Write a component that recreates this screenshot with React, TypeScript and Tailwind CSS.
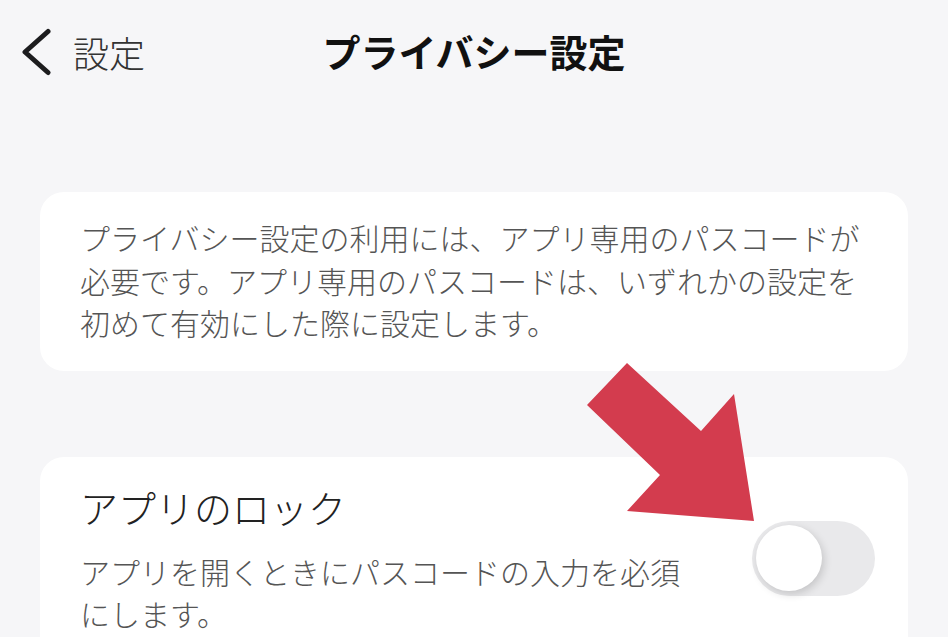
import React from "react";

export default function App() {
  const font = { fontFamily: '"Noto Sans CJK JP", "Noto Sans", sans-serif' };
  return (
    <div className="w-[948px] h-[637px] overflow-hidden bg-[#f6f6f8]" style={font}>
      <header className="grid grid-cols-[1fr_auto_1fr] items-center h-[104px]">
        <div className="flex items-center pl-[21px]">
          <svg width="30" height="52" viewBox="0 0 30 52" className="shrink-0">
            <path d="M27 5.5 L4 26 L27 46.5" fill="none" stroke="#1c1c1e" strokeWidth="5" strokeLinecap="round" strokeLinejoin="round" />
          </svg>
          <span className="ml-[22px] text-[36px] leading-none font-light text-[#333]">設定</span>
        </div>
        <h1 className="text-[38px] leading-none font-bold text-[#111] -mt-[2px]">プライバシー設定</h1>
        <div />
      </header>

      <main className="px-[40px] pt-[88px] flex flex-col gap-[86px]">
        <section className="bg-white rounded-[24px] pl-[40px] pr-[36px] pt-[24px] pb-[27px]">
          <p className="text-[30px] leading-[42.5px] font-light text-[#555]">
            プライバシー設定の利用には、アプリ専用のパスコードが必要です。アプリ専用のパスコードは、いずれかの設定を初めて有効にした際に設定します。
          </p>
        </section>

        <section className="relative bg-white rounded-[24px] pl-[40px] pr-[33px] pt-[26px] pb-[30px] flex items-start">
          <div className="w-[620px]">
            <div className="text-[38px] leading-[48px] font-light text-[#222]">アプリのロック</div>
            <p className="mt-[19px] text-[30px] leading-[42px] font-light text-[#555]">
              アプリを開くときにパスコードの入力を必須にします。
            </p>
          </div>
          <div className="ml-auto mt-[38px] w-[123px] h-[75px] rounded-full bg-[#e9e9eb] p-[4px] flex items-center">
            <div className="w-[66px] h-[66px] rounded-full bg-white shadow-[2px_3px_8px_rgba(0,0,0,0.16)]" />
          </div>
        </section>
      </main>

      <svg className="absolute left-0 top-0 pointer-events-none" width="948" height="637" viewBox="0 0 948 637">
        <polygon
          points="627,363 701,431 734,394 754,521 627,511 660,475 587,405"
          fill="#d33c4e"
        />
      </svg>
    </div>
  );
}
